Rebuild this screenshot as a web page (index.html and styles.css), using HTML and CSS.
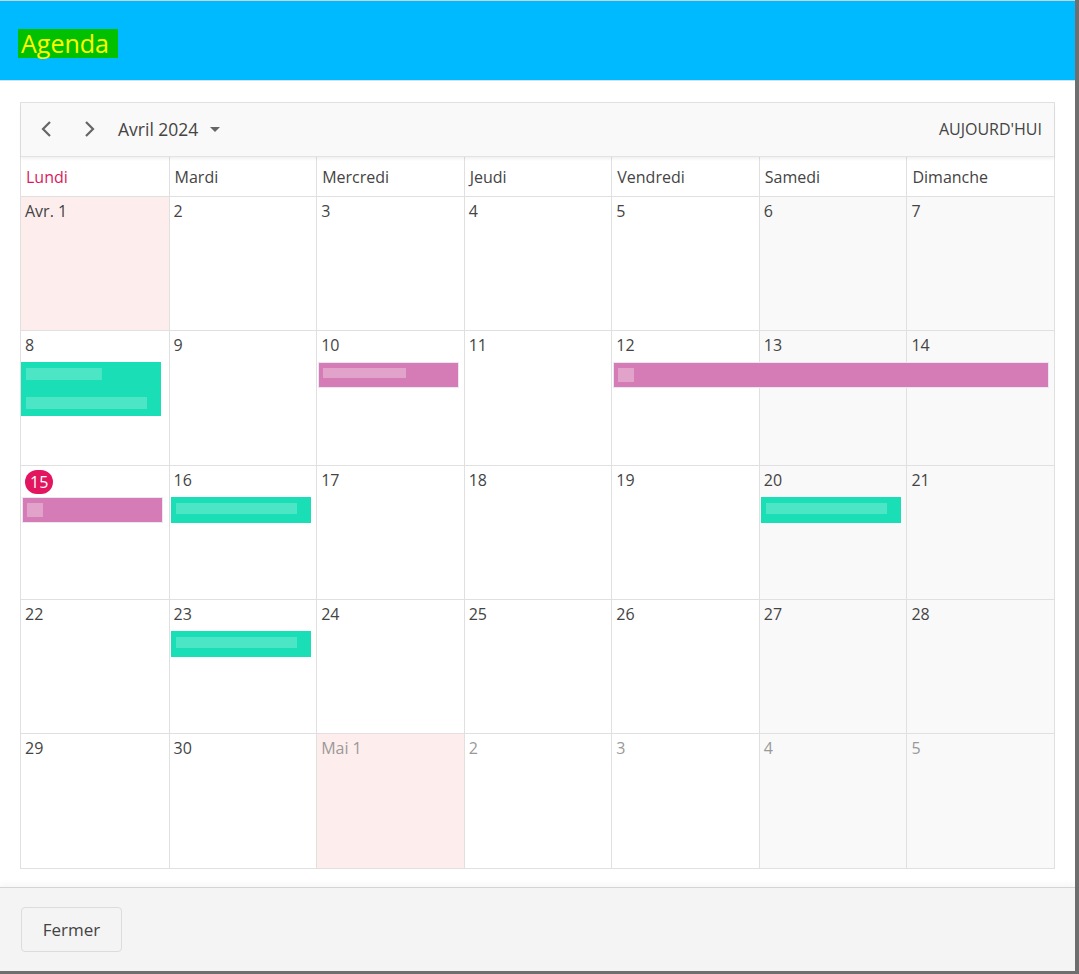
FILE: index.html
```html
<!DOCTYPE html>
<html lang="fr">
<head>
    <meta charset="UTF-8">
    <title>Agenda</title>
    <link rel="stylesheet" href="styles.css">
</head>
<body>
    <div class="dialog">
        <div class="dialog-header">
            <span class="dialog-title">Agenda </span>
        </div>
        <div class="dialog-body">
            <div class="calendar">
                <div class="toolbar">
                    <div class="nav">
                        <button class="nav-btn" aria-label="Précédent">
                            <svg width="14" height="18" viewBox="0 0 14 18"><path d="M10 2 L3 9 L10 16" fill="none" stroke="#666" stroke-width="2.2"/></svg>
                        </button>
                        <button class="nav-btn" aria-label="Suivant">
                            <svg width="14" height="18" viewBox="0 0 14 18"><path d="M4 2 L11 9 L4 16" fill="none" stroke="#666" stroke-width="2.2"/></svg>
                        </button>
                        <span class="month">Avril 2024</span>
                        <svg class="caret" width="12" height="8" viewBox="0 0 12 8"><path d="M1 1 L11 1 L6 6 Z" fill="#666"/></svg>
                    </div>
                    <span class="today-btn">AUJOURD'HUI</span>
                </div>

                <div class="day-names">
                    <div class="day-name current">Lundi</div>
                    <div class="day-name">Mardi</div>
                    <div class="day-name">Mercredi</div>
                    <div class="day-name">Jeudi</div>
                    <div class="day-name">Vendredi</div>
                    <div class="day-name">Samedi</div>
                    <div class="day-name">Dimanche</div>
                </div>

                <div class="week">
                    <div class="cell first c1"><span class="date">Avr. 1</span></div>
                    <div class="cell c2"><span class="date">2</span></div>
                    <div class="cell c3"><span class="date">3</span></div>
                    <div class="cell c4"><span class="date">4</span></div>
                    <div class="cell c5"><span class="date">5</span></div>
                    <div class="cell weekend c6"><span class="date">6</span></div>
                    <div class="cell weekend c7"><span class="date">7</span></div>
                </div>

                <div class="week">
                    <div class="cell c1"><span class="date">8</span></div>
                    <div class="cell c2"><span class="date">9</span></div>
                    <div class="cell c3"><span class="date">10</span></div>
                    <div class="cell c4"><span class="date">11</span></div>
                    <div class="cell c5"><span class="date">12</span></div>
                    <div class="cell weekend c6"><span class="date">13</span></div>
                    <div class="cell weekend c7"><span class="date">14</span></div>
                    <div class="event teal tall edge" style="grid-column: 1 / 2"></div>
                    <div class="event pink" style="grid-column: 3 / 4"></div>
                    <div class="event pink plain" style="grid-column: 5 / 8"></div>
                </div>

                <div class="week">
                    <div class="cell c1"><span class="date today">15</span></div>
                    <div class="cell c2"><span class="date">16</span></div>
                    <div class="cell c3"><span class="date">17</span></div>
                    <div class="cell c4"><span class="date">18</span></div>
                    <div class="cell c5"><span class="date">19</span></div>
                    <div class="cell weekend c6"><span class="date">20</span></div>
                    <div class="cell weekend c7"><span class="date">21</span></div>
                    <div class="event pink plain near" style="grid-column: 1 / 2"></div>
                    <div class="event teal" style="grid-column: 2 / 3"></div>
                    <div class="event teal" style="grid-column: 6 / 7"></div>
                </div>

                <div class="week">
                    <div class="cell c1"><span class="date">22</span></div>
                    <div class="cell c2"><span class="date">23</span></div>
                    <div class="cell c3"><span class="date">24</span></div>
                    <div class="cell c4"><span class="date">25</span></div>
                    <div class="cell c5"><span class="date">26</span></div>
                    <div class="cell weekend c6"><span class="date">27</span></div>
                    <div class="cell weekend c7"><span class="date">28</span></div>
                    <div class="event teal" style="grid-column: 2 / 3"></div>
                </div>

                <div class="week last">
                    <div class="cell c1"><span class="date">29</span></div>
                    <div class="cell c2"><span class="date">30</span></div>
                    <div class="cell first other c3"><span class="date">Mai 1</span></div>
                    <div class="cell other c4"><span class="date">2</span></div>
                    <div class="cell other c5"><span class="date">3</span></div>
                    <div class="cell weekend other c6"><span class="date">4</span></div>
                    <div class="cell weekend other c7"><span class="date">5</span></div>
                </div>
            </div>
        </div>
        <div class="dialog-footer">
            <button class="close-btn">Fermer</button>
        </div>
    </div>
</body>
</html>
```

FILE: styles.css
```css
body {
    margin: 0;
    background-color: #6f6f6f;
    font-family: 'Open Sans', 'Noto Sans', sans-serif;
    color: #444;
}

.dialog {
    width: 1075px;
    height: 971px;
    background-color: white;
    display: flex;
    flex-direction: column;
    border-top: 1px solid #c8d4da;
    box-sizing: border-box;
}

.dialog-header {
    height: 80px;
    background-color: #00baff;
    border-bottom: 1px solid #cfe3ea;
    display: flex;
    align-items: center;
    padding-left: 18px;
    padding-top: 5px;
    box-sizing: border-box;
}

.dialog-title {
    background-color: #00c000;
    color: #ffff00;
    font-size: 25px;
    line-height: 29px;
    padding: 0 9px 0 3px;
}

.dialog-body {
    flex: 1;
    padding: 21px 20px 0 20px;
}

.calendar {
    width: 1035px;
    border: 1px solid #e0e0e0;
    box-sizing: border-box;
}

.toolbar {
    height: 54px;
    box-sizing: border-box;
    background-color: #f9f9f9;
    border-bottom: 1px solid #e3e3e3;
    box-shadow: 0 2px 3px rgba(0, 0, 0, 0.06);
    display: flex;
    align-items: center;
    justify-content: space-between;
    padding: 0 12px 2px 5px;
    position: relative;
}

.nav {
    display: flex;
    align-items: center;
}

.nav-btn {
    background: none;
    border: none;
    padding: 0;
    width: 42px;
    height: 30px;
    display: flex;
    align-items: center;
    justify-content: center;
}

.month {
    font-size: 17.5px;
    color: #444;
    margin-left: 8px;
}

.caret {
    margin-left: 11px;
    margin-top: 2px;
}

.today-btn {
    font-size: 16px;
    color: #444;
}

.day-names {
    display: grid;
    grid-template-columns: repeat(7, 1fr);
    height: 40px;
    box-sizing: border-box;
    border-bottom: 1px solid #e0e0e0;
}

.day-name {
    font-size: 16px;
    padding: 9px 0 0 5px;
    border-left: 1px solid #e0e0e0;
    box-sizing: border-box;
}

.day-name:first-child {
    border-left: none;
}

.day-name.current {
    color: #d81b60;
}

.week {
    display: grid;
    grid-template-columns: repeat(7, 1fr);
    grid-template-rows: 31px 28px 1fr;
    height: 134.3px;
    box-sizing: border-box;
    border-bottom: 1px solid #e0e0e0;
}

.week.last {
    border-bottom: none;
}

.cell {
    grid-row: 1 / -1;
    border-left: 1px solid #e0e0e0;
    padding: 3px 0 0 4px;
    font-size: 16px;
    box-sizing: border-box;
}

.c1 { grid-column: 1; border-left: none; }
.c2 { grid-column: 2; }
.c3 { grid-column: 3; }
.c4 { grid-column: 4; }
.c5 { grid-column: 5; }
.c6 { grid-column: 6; }
.c7 { grid-column: 7; }

.cell.weekend {
    background-color: #f9f9f9;
}

.cell.first {
    background-color: #fdeeed;
}

.cell.other .date {
    color: #999;
}

.date {
    display: inline-block;
    line-height: 22px;
}

.date.today {
    background-color: #e3155e;
    color: white;
    border-radius: 12px;
    padding: 0 5px;
    margin-top: 1px;
    line-height: 24px;
    font-size: 16px;
}

.event {
    grid-row: 2;
    height: 26px;
    margin: 0 5px 0 2px;
    background-color: #d57bb5;
    border: 1px solid #ebe6f3;
    box-sizing: border-box;
    background-image:
        linear-gradient(rgba(255, 255, 255, 0.3), rgba(255, 255, 255, 0.3));
    background-size: 60% 10px;
    background-position: 4px 5px;
    background-repeat: no-repeat;
}

.event.plain {
    background-size: 16px 14px;
}

.event.near {
    margin-left: 1px;
    margin-right: 6px;
}

.event.teal {
    background-color: #1adfb6;
    border-color: #1adfb6;
    background-size: 88% 11px;
    background-image:
        linear-gradient(rgba(255, 255, 255, 0.22), rgba(255, 255, 255, 0.22));
}

.event.tall {
    height: 54px;
    grid-row: 2 / 4;
    align-self: start;
    background-image:
        linear-gradient(rgba(255, 255, 255, 0.22), rgba(255, 255, 255, 0.22)),
        linear-gradient(rgba(255, 255, 255, 0.22), rgba(255, 255, 255, 0.22));
    background-size: 55% 12px, 88% 12px;
    background-position: 4px 5px, 4px 34px;
}

.event.edge {
    margin-left: 0;
    margin-right: 8px;
}

.dialog-footer {
    height: 84px;
    background-color: #f4f4f4;
    border-top: 1px solid #d4d4d4;
    box-shadow: 0 -3px 6px rgba(0, 0, 0, 0.04);
    display: flex;
    align-items: center;
    padding-left: 21px;
    box-sizing: border-box;
}

.close-btn {
    font-family: 'Open Sans', 'Noto Sans', sans-serif;
    font-size: 17px;
    color: #444;
    background-color: #f4f4f4;
    border: 1px solid #dcdcdc;
    border-radius: 4px;
    width: 101px;
    height: 45px;
    cursor: pointer;
}
```
